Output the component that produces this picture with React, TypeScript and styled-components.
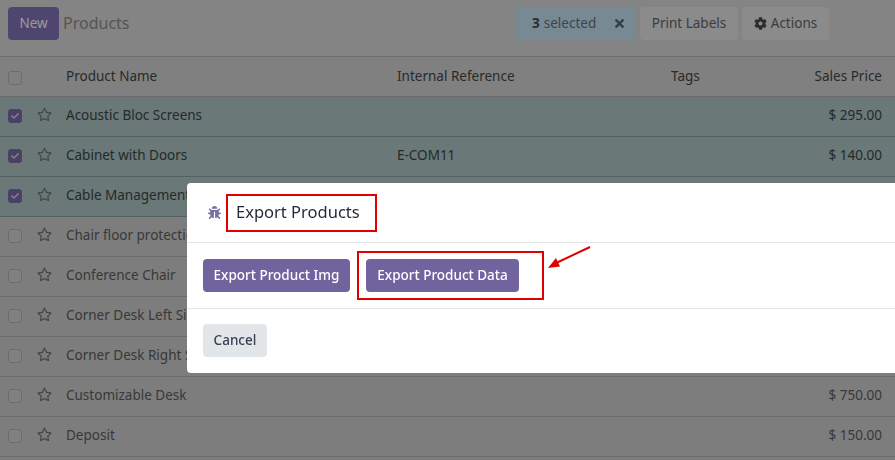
import React from "react";
import styled, { createGlobalStyle } from "styled-components";
import { FaBug, FaCheck, FaCog, FaRegStar, FaTimes } from "react-icons/fa";

const GlobalStyle = createGlobalStyle`
  html, body {
    margin: 0;
    padding: 0;
    height: 100%;
    overflow: hidden;
    background: #d0d0d0;
  }
  body {
    font-family: "Noto Sans", "Open Sans", sans-serif;
    font-size: 13.5px;
    color: #5f5f5f;
  }
  * { box-sizing: border-box; }
`;

const Page = styled.div`
  width: 895px;
  height: 460px;
  overflow: hidden;
  background: #d0d0d0;
`;

const ControlPanel = styled.div`
  height: 57px;
  display: flex;
  align-items: flex-start;
  padding: 7px 0 0 8px;
  border-bottom: 1px solid #b8b8b8;
  background: #dcdcdc;
`;

const NewButton = styled.button`
  width: 51px;
  height: 33px;
  padding: 0 0 2px;
  border: 0;
  border-radius: 4px;
  background: #8275ba;
  color: #fff;
  font: inherit;
`;

const Breadcrumb = styled.div`
  margin-left: 4px;
  font-size: 16px;
  line-height: 33px;
  color: #8e8e8e;
  flex: 0 0 452px;
`;

const Selection = styled.div`
  width: 121px;
  height: 33px;
  display: flex;
  align-items: center;
  padding: 0 0 2px 17px;
  margin-right: 4px;
  border-radius: 4px;
  background: #c6e4f6;
  color: #66737d;

  b { margin-right: 4px; font-weight: 700; color: #454f58; }
  svg { margin: 2px 0 0 17px; font-size: 13px; color: #56697a; }
`;

const GreyButton = styled.div<{ $width: number }>`
  width: ${(p) => p.$width}px;
  height: 33px;
  margin-right: 4px;
  padding-bottom: 2px;
  display: flex;
  align-items: center;
  justify-content: center;
  gap: 4px;
  border-radius: 4px;
  background: #e8e8e8;
  color: #666;

  svg { font-size: 13px; margin-top: 2px; color: #4a4a4a; }
`;

const Columns = styled.div<{ $selected?: boolean; $head?: boolean }>`
  height: 40px;
  display: grid;
  grid-template-columns: 66px 331px 274px 60px 1fr;
  align-items: center;
  padding-right: 13px;
  padding-bottom: ${(p) => (p.$head ? 1 : 4)}px;
  border-bottom: 1px solid ${(p) => (p.$selected ? "#8ba0a0" : "#b2b2b2")};
  background: ${(p) => (p.$selected ? "#b1c8c8" : p.$head ? "#d6d6d6" : "#d0d0d0")};
`;

const Lead = styled.div`
  display: flex;
  align-items: center;
  padding: 0 0 0 8px;
  height: 16px;
`;

const Check = styled.span<{ $on?: boolean }>`
  width: 14px;
  height: 14px;
  margin-top: 3px;
  display: inline-flex;
  align-items: center;
  justify-content: center;
  border-radius: 3px;
  border: 1px solid ${(p) => (p.$on ? "#7a6daa" : "#b4b4b4")};
  background: ${(p) => (p.$on ? "#7a6daa" : "#d6d6d6")};
  color: #d8d8e0;

  svg { font-size: 8px; }
`;

const Star = styled.span`
  margin: 0 0 1px 15px;
  display: inline-flex;
  font-size: 15px;
  color: #707878;
`;

const HeadCell = styled.div<{ $right?: boolean }>`
  color: #464646;
  text-align: ${(p) => (p.$right ? "right" : "left")};
  white-space: nowrap;
`;

const Cell = styled.div<{ $right?: boolean; $on?: boolean }>`
  color: ${(p) => (p.$on ? "#3a4747" : "#5f5f5f")};
  text-align: ${(p) => (p.$right ? "right" : "left")};
  white-space: nowrap;
`;

const Backdrop = styled.div`
  position: fixed;
  inset: 0;
  background: rgba(0, 0, 0, 0.4);
`;

const Dialog = styled.div`
  position: fixed;
  left: 187px;
  top: 183px;
  width: 708px;
  height: 190px;
  background: #fff;
  border-radius: 4px 0 0 4px;
  display: flex;
  flex-direction: column;
  color: #374151;
`;

const DialogHeader = styled.div`
  height: 60px;
  display: flex;
  align-items: center;
  padding: 0 0 0 21px;
  border-bottom: 1px solid #e2e4e8;

  > svg { font-size: 13px; color: #7a6ea6; margin-right: 5px; }
`;

const Annotated = styled.div`
  border: 2px solid #e00000;
`;

const TitleBox = styled(Annotated)`
  width: 151px;
  height: 38px;
  padding: 0 0 2px 8px;
  display: flex;
  align-items: center;
  font-size: 16.5px;
  color: #1f2937;
  white-space: nowrap;
`;

const DialogBody = styled.div`
  height: 66px;
  display: flex;
  align-items: center;
  padding-left: 16px;
  border-bottom: 1px solid #e2e4e8;
`;

const PrimaryButton = styled.button<{ $width: number }>`
  width: ${(p) => p.$width}px;
  height: 33px;
  padding: 0 0 2px;
  border: 0;
  border-radius: 4px;
  background: #71639e;
  color: #fff;
  font: inherit;
  font-weight: 500;
  white-space: nowrap;
`;

const ButtonBox = styled(Annotated)`
  width: 187px;
  height: 49px;
  margin-left: 7px;
  padding-left: 7px;
  display: flex;
  align-items: center;
`;

const DialogFooter = styled.div`
  flex: 1;
  display: flex;
  align-items: flex-start;
  padding: 15px 0 0 16px;
`;

const CancelButton = styled.button`
  width: 64px;
  height: 33px;
  padding: 0 0 2px;
  border: 0;
  border-radius: 4px;
  background: #e3e6e8;
  color: #374151;
  font: inherit;
  font-weight: 500;
`;

const ArrowMark = styled.svg`
  position: fixed;
  left: 540px;
  top: 240px;
`;

const rows = [
  { name: "Acoustic Bloc Screens", ref: "", price: "$ 295.00", on: true },
  { name: "Cabinet with Doors", ref: "E-COM11", price: "$ 140.00", on: true },
  { name: "Cable Management Box", ref: "", price: "", on: true },
  { name: "Chair floor protection", ref: "", price: "", on: false },
  { name: "Conference Chair", ref: "", price: "", on: false },
  { name: "Corner Desk Left Sit", ref: "", price: "", on: false },
  { name: "Corner Desk Right Sit", ref: "", price: "", on: false },
  { name: "Customizable Desk", ref: "", price: "$ 750.00", on: false },
  { name: "Deposit", ref: "", price: "$ 150.00", on: false },
];

export default function App() {
  return (
    <Page>
      <GlobalStyle />
      <ControlPanel>
        <NewButton>New</NewButton>
        <Breadcrumb>Products</Breadcrumb>
        <Selection>
          <b>3</b> selected
          <FaTimes />
        </Selection>
        <GreyButton $width={98}>Print Labels</GreyButton>
        <GreyButton $width={87}>
          <FaCog />
          Actions
        </GreyButton>
      </ControlPanel>
      <Columns $head>
        <Lead>
          <Check />
        </Lead>
        <HeadCell>Product Name</HeadCell>
        <HeadCell>Internal Reference</HeadCell>
        <HeadCell>Tags</HeadCell>
        <HeadCell $right>Sales Price</HeadCell>
      </Columns>
      {rows.map((row) => (
        <Columns key={row.name} $selected={row.on}>
          <Lead>
            <Check $on={row.on}>{row.on && <FaCheck />}</Check>
            <Star>
              <FaRegStar />
            </Star>
          </Lead>
          <Cell $on={row.on}>{row.name}</Cell>
          <Cell $on={row.on}>{row.ref}</Cell>
          <Cell />
          <Cell $right $on={row.on}>
            {row.price}
          </Cell>
        </Columns>
      ))}
      <Backdrop />
      <Dialog>
        <DialogHeader>
          <FaBug />
          <TitleBox>Export Products</TitleBox>
        </DialogHeader>
        <DialogBody>
          <PrimaryButton $width={147}>Export Product Img</PrimaryButton>
          <ButtonBox>
            <PrimaryButton $width={153}>Export Product Data</PrimaryButton>
          </ButtonBox>
        </DialogBody>
        <DialogFooter>
          <CancelButton>Cancel</CancelButton>
        </DialogFooter>
      </Dialog>
      <ArrowMark width="56" height="34" viewBox="0 0 56 34">
        <line x1="50" y1="7" x2="14" y2="24" stroke="#e00000" strokeWidth="2" />
        <polygon points="8,28 20,26.5 16,18" fill="#e00000" />
      </ArrowMark>
    </Page>
  );
}
